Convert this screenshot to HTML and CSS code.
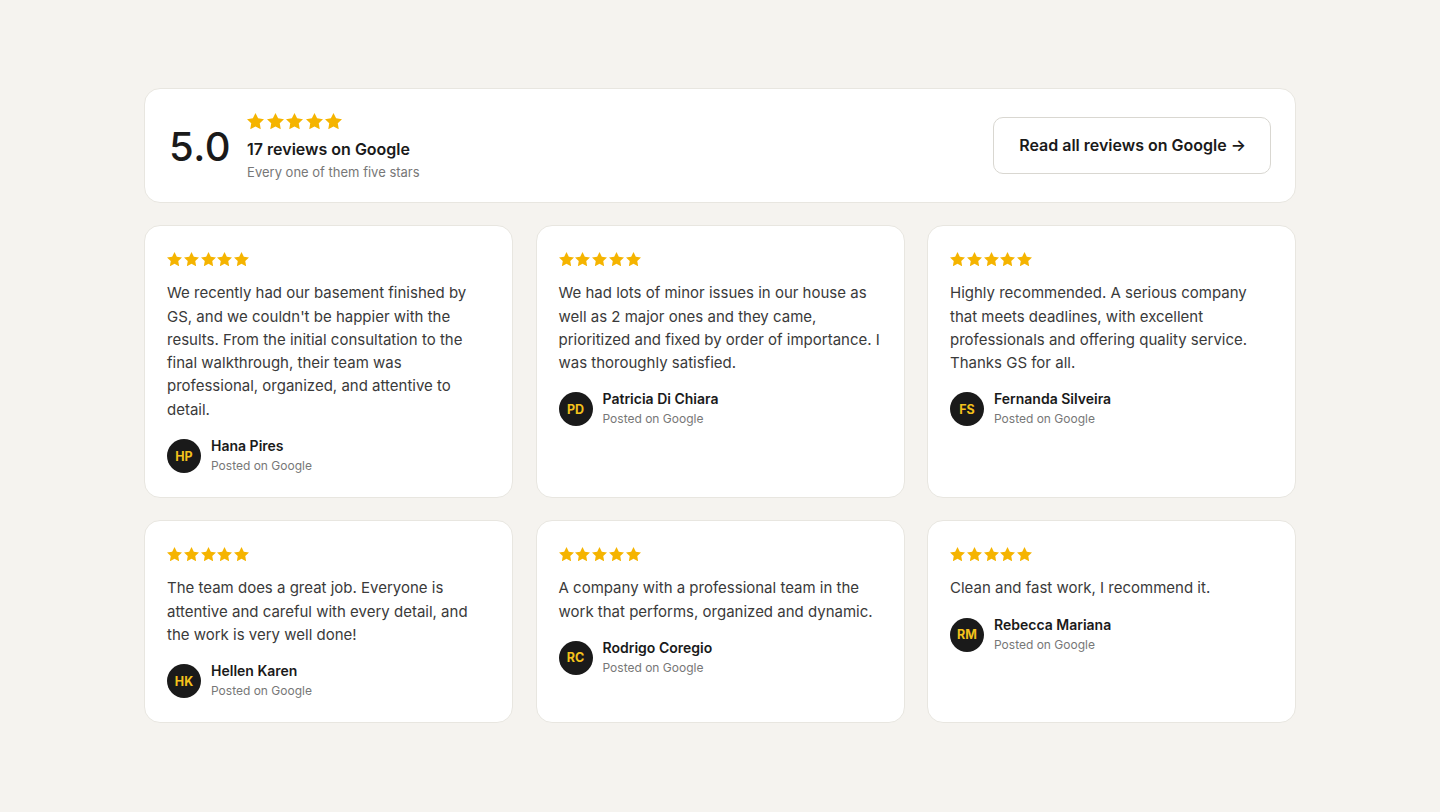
FILE: index.html
```html
<!DOCTYPE html>
<html lang="en">
  <head>
    <meta charset="UTF-8" />
    <meta name="viewport" content="width=device-width, initial-scale=1.0" />
    <title>Reviews</title>
    <link rel="stylesheet" href="styles.css">
  </head>

  <body>
    <svg width="0" height="0" class="defs">
      <symbol id="star" viewBox="2 2 20 19.02">
        <path d="M12 2l3.09 6.26L22 9.27l-5 4.87 1.18 6.88L12 17.77l-6.18 3.25L7 14.14 2 9.27l6.91-1.01L12 2z" />
      </symbol>
    </svg>

    <main class="reviews">
      <header class="summary">
        <div class="summary-left">
          <div class="score">5.0</div>
          <div class="summary-text">
            <div class="stars stars-big">
              <svg><use href="#star" /></svg>
              <svg><use href="#star" /></svg>
              <svg><use href="#star" /></svg>
              <svg><use href="#star" /></svg>
              <svg><use href="#star" /></svg>
            </div>
            <div class="summary-title">17 reviews on Google</div>
            <div class="summary-sub">Every one of them five stars</div>
          </div>
        </div>
        <a class="btn" href="#">Read all reviews on Google →</a>
      </header>

      <div class="grid">
        <div class="card">
          <div class="stars">
            <svg><use href="#star" /></svg>
            <svg><use href="#star" /></svg>
            <svg><use href="#star" /></svg>
            <svg><use href="#star" /></svg>
            <svg><use href="#star" /></svg>
          </div>
          <p class="quote">We recently had our basement finished by GS, and we couldn't be happier with the results. From the initial consultation to the final walkthrough, their team was professional, organized, and attentive to detail.</p>
          <div class="author">
            <div class="avatar">HP</div>
            <div>
              <div class="name">Hana Pires</div>
              <div class="posted">Posted on Google</div>
            </div>
          </div>
        </div>

        <div class="card">
          <div class="stars">
            <svg><use href="#star" /></svg>
            <svg><use href="#star" /></svg>
            <svg><use href="#star" /></svg>
            <svg><use href="#star" /></svg>
            <svg><use href="#star" /></svg>
          </div>
          <p class="quote">We had lots of minor issues in our house as well as 2 major ones and they came, prioritized and fixed by order of importance. I was thoroughly satisfied.</p>
          <div class="author">
            <div class="avatar">PD</div>
            <div>
              <div class="name">Patricia Di Chiara</div>
              <div class="posted">Posted on Google</div>
            </div>
          </div>
        </div>

        <div class="card">
          <div class="stars">
            <svg><use href="#star" /></svg>
            <svg><use href="#star" /></svg>
            <svg><use href="#star" /></svg>
            <svg><use href="#star" /></svg>
            <svg><use href="#star" /></svg>
          </div>
          <p class="quote">Highly recommended. A serious company that meets deadlines, with excellent professionals and offering quality service. Thanks GS for all.</p>
          <div class="author">
            <div class="avatar">FS</div>
            <div>
              <div class="name">Fernanda Silveira</div>
              <div class="posted">Posted on Google</div>
            </div>
          </div>
        </div>

        <div class="card">
          <div class="stars">
            <svg><use href="#star" /></svg>
            <svg><use href="#star" /></svg>
            <svg><use href="#star" /></svg>
            <svg><use href="#star" /></svg>
            <svg><use href="#star" /></svg>
          </div>
          <p class="quote">The team does a great job. Everyone is attentive and careful with every detail, and the work is very well done!</p>
          <div class="author">
            <div class="avatar">HK</div>
            <div>
              <div class="name">Hellen Karen</div>
              <div class="posted">Posted on Google</div>
            </div>
          </div>
        </div>

        <div class="card">
          <div class="stars">
            <svg><use href="#star" /></svg>
            <svg><use href="#star" /></svg>
            <svg><use href="#star" /></svg>
            <svg><use href="#star" /></svg>
            <svg><use href="#star" /></svg>
          </div>
          <p class="quote">A company with a professional team in the work that performs, organized and dynamic.</p>
          <div class="author">
            <div class="avatar">RC</div>
            <div>
              <div class="name">Rodrigo Coregio</div>
              <div class="posted">Posted on Google</div>
            </div>
          </div>
        </div>

        <div class="card">
          <div class="stars">
            <svg><use href="#star" /></svg>
            <svg><use href="#star" /></svg>
            <svg><use href="#star" /></svg>
            <svg><use href="#star" /></svg>
            <svg><use href="#star" /></svg>
          </div>
          <p class="quote">Clean and fast work, I recommend it.</p>
          <div class="author">
            <div class="avatar">RM</div>
            <div>
              <div class="name">Rebecca Mariana</div>
              <div class="posted">Posted on Google</div>
            </div>
          </div>
        </div>
      </div>
    </main>
  </body>
</html>
```

FILE: styles.css
```css
* {
  margin: 0;
  padding: 0;
  box-sizing: border-box;
}

body {
  background-color: #f5f3ef;
  font-family: Inter, "Noto Sans", sans-serif;
  color: #1a1a1a;
}

.defs {
  position: absolute;
}

.reviews {
  width: 1152px;
  margin: 0 auto;
  padding-top: 88px;
}

.summary {
  display: flex;
  align-items: center;
  justify-content: space-between;
  height: 115px;
  padding: 0 24px;
  background-color: #fff;
  border: 1px solid #e8e6e0;
  border-radius: 16px;
}

.summary-left {
  display: flex;
  align-items: center;
  gap: 17px;
}

.score {
  font-size: 40px;
  font-weight: 500;
  letter-spacing: 0.5px;
  line-height: 1;
  padding-top: 2px;
}

.summary-text {
  padding-top: 3px;
  margin-left: -1px;
}

.stars {
  display: flex;
  gap: 1.75px;
  color: #f5b400;
  fill: currentColor;
  margin-bottom: 15px;
}

.stars svg {
  width: 15px;
  height: 14.3px;
}

.stars-big {
  gap: 2.5px;
  margin-bottom: 8px;
}

.stars-big svg {
  width: 17px;
  height: 16.2px;
}

.summary-title {
  font-size: 16px;
  font-weight: 600;
  line-height: 22px;
}

.summary-sub {
  font-size: 13px;
  color: #777;
  line-height: 18px;
  margin-top: 3px;
}

.btn {
  display: flex;
  align-items: center;
  height: 57px;
  padding: 0 24px 0 25px;
  margin-top: -1px;
  border: 1px solid #d9d7d1;
  border-radius: 10px;
  background-color: #fff;
  color: #1a1a1a;
  font-size: 16px;
  font-weight: 600;
  text-decoration: none;
}

.grid {
  display: grid;
  grid-template-columns: repeat(3, 1fr);
  gap: 22px 22.5px;
  margin-top: 22px;
}

.card {
  background-color: #fff;
  border: 1px solid #e8e6e0;
  border-radius: 16px;
  padding: 26px 22px 21px 22px;
}

.quote {
  font-size: 15px;
  line-height: 23.3px;
  color: #3a3a3a;
}

.author {
  display: flex;
  align-items: center;
  gap: 10px;
  margin-top: 15px;
}

.avatar {
  width: 34px;
  height: 34px;
  border-radius: 50%;
  background-color: #1a1a1a;
  color: #f4c21c;
  font-size: 12.5px;
  font-weight: 700;
  display: flex;
  align-items: center;
  justify-content: center;
}

.name {
  font-size: 14px;
  font-weight: 600;
  line-height: 20px;
}

.posted {
  font-size: 12px;
  color: #777;
  line-height: 20px;
}
```
